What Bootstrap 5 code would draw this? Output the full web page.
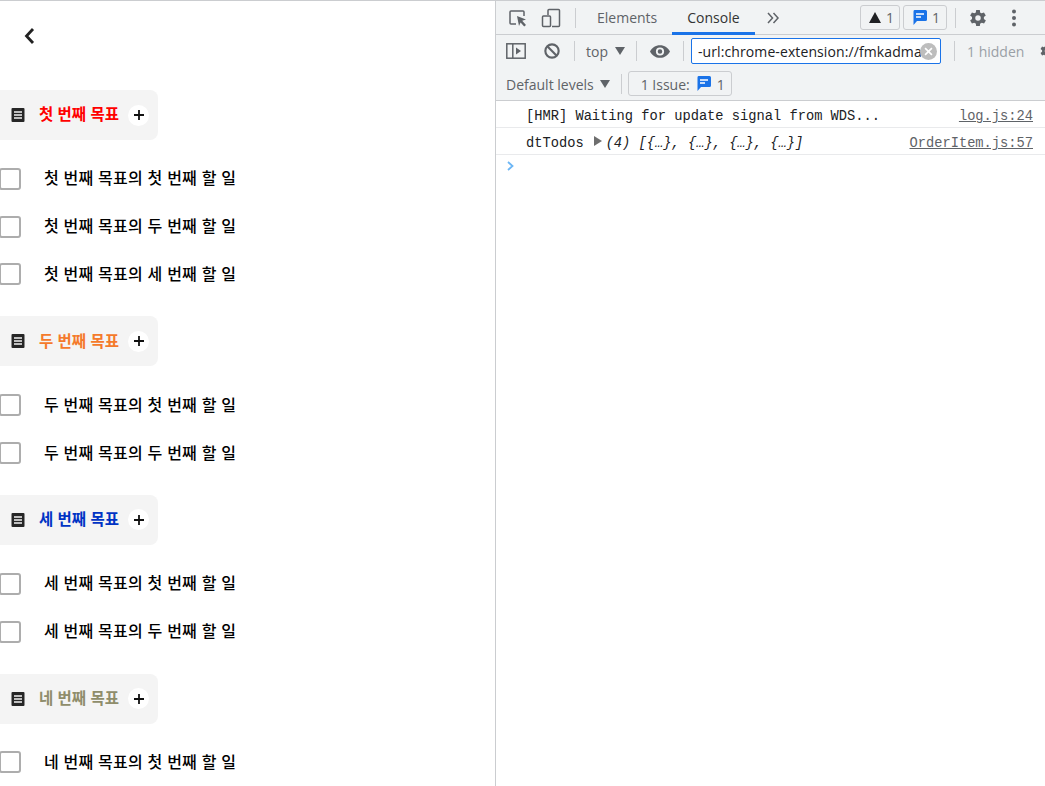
<!doctype html>
<html lang="ko"><head><meta charset="utf-8"><title>Todos</title>
<link href="https://cdn.jsdelivr.net/npm/bootstrap@5.3.0/dist/css/bootstrap.min.css" rel="stylesheet">
<style>
html,body{height:786px;overflow:hidden;background:#fff}
body{font-family:"Noto Sans CJK KR",sans-serif}
.frame{height:786px;border-top:1px solid #cbcdd0}
.app{width:495px;flex:none;overflow:hidden;background:#fff}
.backbar{height:89px;padding:20px 0 0 22px}
.goalhead{width:158px;height:50px;background:#f4f4f4;border-radius:0 8px 8px 0;padding-left:10px}
.goalname{font-size:15.5px;font-weight:700;margin:-2px 0 0 13px;width:81px;white-space:nowrap}
.plus{width:21px;height:21px;border-radius:50%;background:#fff;margin-left:8px}
.goal{margin-bottom:18px}
.goal>.tasks{margin-top:15px}
.taskrow{height:47.8px;margin-left:-1px}
.tick{width:22px;height:22px;border:2px solid #adadad;border-radius:3px;background:#fff;flex:none}
.taskname{margin:-3px 0 0 23px;font-size:16px;font-weight:500;color:#000;letter-spacing:.2px;white-space:nowrap}
.red{color:#f00}.orange{color:#f47a2b}.blue{color:#0033c4}.khaki{color:#8f8d6b}
.devtools{flex:1;min-width:0;overflow:hidden;border-left:1px solid #cbcdd0;font-family:"Open Sans",sans-serif;color:#5f6368;font-size:14px}
.bar{background:#f1f3f4;display:flex;align-items:center}
.bar svg{flex:none;display:block}
.bar1{height:34px;border-bottom:1px solid #cbcdd0;padding-left:12px}
.bar2{height:32px;padding-left:10px}
.bar3{height:34px;padding-left:10px;border-bottom:1px solid #cbcdd0}
.bar3 span{padding-top:2px}
.vsep{width:1px;height:20px;background:#cbcdd0;flex:none}
.dtab{height:33px;line-height:33px;padding:0 15px;white-space:nowrap}
.dtab.on{color:#333;border-bottom:3px solid #1a73e8;height:34px;margin-bottom:-1px}
.chip{height:25px;border:1px solid #cbcdd0;border-radius:3px;display:flex;align-items:center;white-space:nowrap;flex:none}
.chipwarn{width:40px;padding-left:8px;gap:5px;margin-left:auto}
.chipinfo{width:44px;padding-left:9px;gap:5px;margin-left:3px}
.chipissue{width:104px;padding-left:12px;margin-left:6px}
.filter{width:250px;height:26px;border:1px solid #1a73e8;border-radius:2px;background:#fff;color:#202124;display:flex;align-items:center;padding-left:6px;white-space:nowrap;flex:none;margin-left:7px;letter-spacing:.1px}
.filter span{flex:1}
.clearx{margin-right:4px;margin-left:-2px}
.dimtxt{color:#9aa0a6;margin-left:12px;white-space:nowrap}
.m6{margin-left:6px}.m7{margin-left:7px}.m8{margin-left:8px}.m11{margin-left:11px}.m13{margin-left:13px}.m14{margin-left:14px}.m18{margin-left:18px}
.dots{margin-right:20px}
.logline{height:27px;padding:7px 12px 0 30px;border-bottom:1px solid #e9eaec;font-family:"Liberation Mono",monospace;font-size:13.72px;color:#202124;display:flex;align-items:center;white-space:nowrap}
.logline a{margin-left:auto;color:#5f6368;text-decoration:underline}
.arrow{width:0;height:0;border-left:8px solid #6e6e6e;border-top:5px solid transparent;border-bottom:5px solid transparent;margin:0 4px 8px 10px}
.objtxt{font-style:italic}
.prompt{padding:5px 0 0 10px}
.prompt svg{display:block}
</style></head><body>
<div class="frame d-flex">
<main class="app">
 <div class="backbar"><svg width="16" height="22" viewBox="0 0 16 22"><path d="M11 4 4.500 11l6.500 7" fill="none" stroke="#212121" stroke-width="2.800"/></svg></div>

 <section class="goal">
  <div class="goalhead d-flex align-items-center">
   <svg width="16" height="16" viewBox="0 0 16 16"><rect x="1.500" y="1" width="13" height="14" rx="1" fill="#262626"/><path d="M4 5h8M4 8h8M4 11h8" stroke="#f4f4f4" stroke-width="1.400"/></svg>
   <div class="goalname red">첫 번째 목표</div>
   <div class="plus d-flex align-items-center justify-content-center"><svg width="12" height="12" viewBox="0 0 12 12"><path d="M6 1v10M1 6h10" stroke="#111" stroke-width="1.800"/></svg></div>
  </div>
  <div class="tasks">
   <div class="taskrow d-flex align-items-center"><div class="tick"></div><div class="taskname">첫 번째 목표의 첫 번째 할 일</div></div>
   <div class="taskrow d-flex align-items-center"><div class="tick"></div><div class="taskname">첫 번째 목표의 두 번째 할 일</div></div>
   <div class="taskrow d-flex align-items-center"><div class="tick"></div><div class="taskname">첫 번째 목표의 세 번째 할 일</div></div>
  </div>
 </section>

 <section class="goal">
  <div class="goalhead d-flex align-items-center">
   <svg width="16" height="16" viewBox="0 0 16 16"><rect x="1.500" y="1" width="13" height="14" rx="1" fill="#262626"/><path d="M4 5h8M4 8h8M4 11h8" stroke="#f4f4f4" stroke-width="1.400"/></svg>
   <div class="goalname orange">두 번째 목표</div>
   <div class="plus d-flex align-items-center justify-content-center"><svg width="12" height="12" viewBox="0 0 12 12"><path d="M6 1v10M1 6h10" stroke="#111" stroke-width="1.800"/></svg></div>
  </div>
  <div class="tasks">
   <div class="taskrow d-flex align-items-center"><div class="tick"></div><div class="taskname">두 번째 목표의 첫 번째 할 일</div></div>
   <div class="taskrow d-flex align-items-center"><div class="tick"></div><div class="taskname">두 번째 목표의 두 번째 할 일</div></div>
  </div>
 </section>

 <section class="goal">
  <div class="goalhead d-flex align-items-center">
   <svg width="16" height="16" viewBox="0 0 16 16"><rect x="1.500" y="1" width="13" height="14" rx="1" fill="#262626"/><path d="M4 5h8M4 8h8M4 11h8" stroke="#f4f4f4" stroke-width="1.400"/></svg>
   <div class="goalname blue">세 번째 목표</div>
   <div class="plus d-flex align-items-center justify-content-center"><svg width="12" height="12" viewBox="0 0 12 12"><path d="M6 1v10M1 6h10" stroke="#111" stroke-width="1.800"/></svg></div>
  </div>
  <div class="tasks">
   <div class="taskrow d-flex align-items-center"><div class="tick"></div><div class="taskname">세 번째 목표의 첫 번째 할 일</div></div>
   <div class="taskrow d-flex align-items-center"><div class="tick"></div><div class="taskname">세 번째 목표의 두 번째 할 일</div></div>
  </div>
 </section>

 <section class="goal">
  <div class="goalhead d-flex align-items-center">
   <svg width="16" height="16" viewBox="0 0 16 16"><rect x="1.500" y="1" width="13" height="14" rx="1" fill="#262626"/><path d="M4 5h8M4 8h8M4 11h8" stroke="#f4f4f4" stroke-width="1.400"/></svg>
   <div class="goalname khaki">네 번째 목표</div>
   <div class="plus d-flex align-items-center justify-content-center"><svg width="12" height="12" viewBox="0 0 12 12"><path d="M6 1v10M1 6h10" stroke="#111" stroke-width="1.800"/></svg></div>
  </div>
  <div class="tasks">
   <div class="taskrow d-flex align-items-center"><div class="tick"></div><div class="taskname">네 번째 목표의 첫 번째 할 일</div></div>
  </div>
 </section>
</main>

<aside class="devtools">
 <div class="bar bar1">
  <svg width="20" height="20" viewBox="0 0 20 20"><path d="M8 16H3a1 1 0 0 1-1-1V4a1 1 0 0 1 1-1h12a1 1 0 0 1 1 1v4" fill="none" stroke="#5f6368" stroke-width="1.500"/><path d="M9 8l9 3.500-3.800 1.200L18 17l-1.800 1.500-3.600-4L11 18z" fill="#5f6368"/></svg>
  <svg class="m13" width="20" height="20" viewBox="0 0 20 20"><path d="M7 7V2.500A1 1 0 0 1 8 1.500h9.500a1 1 0 0 1 1 1v15a1 1 0 0 1-1 1H11" fill="none" stroke="#5f6368" stroke-width="1.500"/><rect x="1.500" y="8" width="8" height="10.500" rx="1" fill="none" stroke="#5f6368" stroke-width="1.500"/></svg>
  <div class="vsep m14"></div>
  <div class="dtab m6">Elements</div>
  <div class="dtab on">Console</div>
  <svg class="m11" width="14" height="14" viewBox="0 0 14 14"><path d="M2 2l4.500 5L2 12M7.500 2 12 7l-4.500 5" fill="none" stroke="#5f6368" stroke-width="1.500"/></svg>
  <div class="chip chipwarn"><svg width="12" height="11" viewBox="0 0 12 11"><path d="M6 0 12 11H0z" fill="#202124"/></svg><span>1</span></div>
  <div class="chip chipinfo"><svg width="14" height="15" viewBox="0 0 14 15"><path d="M1.500 0h11A1.500 1.500 0 0 1 14 1.500v8A1.500 1.500 0 0 1 12.500 11H4l-3.500 4V1.500A1.500 1.500 0 0 1 1.500 0z" fill="#1a73e8"/><path d="M3 4h8M3 7h5" stroke="#fff" stroke-width="1.300"/></svg><span>1</span></div>
  <div class="vsep m8"></div>
  <svg class="m11" width="22" height="22" viewBox="0 0 24 24"><path fill="#5f6368" fill-rule="evenodd" d="M19.400 13a7.500 7.500 0 0 0 0-2l2.100-1.600-2-3.500-2.500 1a7.500 7.500 0 0 0-1.700-1L15 3.300h-4l-.4 2.600a7.500 7.500 0 0 0-1.700 1l-2.500-1-2 3.500L6.500 11a7.500 7.500 0 0 0 0 2l-2.100 1.600 2 3.500 2.500-1a7.500 7.500 0 0 0 1.700 1l.4 2.600h4l.4-2.600a7.500 7.500 0 0 0 1.700-1l2.500 1 2-3.500zM13 15a3 3 0 1 1 0-6 3 3 0 0 1 0 6z" transform="translate(-1 0)"/></svg>
  <svg class="m14 dots" width="22" height="22" viewBox="0 0 22 22"><circle cx="11" cy="4.500" r="2" fill="#5f6368"/><circle cx="11" cy="11" r="2" fill="#5f6368"/><circle cx="11" cy="17.500" r="2" fill="#5f6368"/></svg>
 </div>
 <div class="bar bar2">
  <svg width="20" height="18" viewBox="0 0 20 18"><rect x=".8" y="1.800" width="18.400" height="14.400" fill="none" stroke="#5f6368" stroke-width="1.500"/><path d="M6.800 2v14" stroke="#5f6368" stroke-width="1.500"/><path d="M10 5.500 15 9l-5 3.500z" fill="#5f6368"/></svg>
  <svg class="m18" width="16" height="16" viewBox="0 0 18 18"><circle cx="9" cy="9" r="7.500" fill="none" stroke="#5f6368" stroke-width="2.400"/><path d="M4 4l10 10" stroke="#5f6368" stroke-width="2.400"/></svg>
  <div class="vsep m14"></div>
  <span class="m11">top</span>
  <svg class="m7" width="10" height="8" viewBox="0 0 10 8"><path d="M0 0h10L5 8z" fill="#5f6368"/></svg>
  <div class="vsep m11"></div>
  <svg class="m13" width="20" height="13" viewBox="0 0 22 14"><path fill-rule="evenodd" d="M11 0C6 0 2 3 0 7c2 4 6 7 11 7s9-3 11-7c-2-4-6-7-11-7zm0 11.500A4.500 4.500 0 1 1 11 2.500a4.500 4.500 0 0 1 0 9zM11 4.500a2.500 2.500 0 1 0 0 5 2.500 2.500 0 0 0 0-5z" fill="#5f6368"/></svg>
  <div class="vsep m13"></div>
  <div class="filter"><span>-url:chrome-extension://fmkadma</span><svg class="clearx" width="17" height="17" viewBox="0 0 16 16"><circle cx="8" cy="8" r="8" fill="#bdbdbd"/><path d="M4.800 4.800l6.400 6.400M11.200 4.800l-6.400 6.400" stroke="#fff" stroke-width="1.500"/></svg></div>
  <div class="vsep m13"></div>
  <span class="dimtxt">1 hidden</span>
  <svg class="m14" width="18" height="18" viewBox="0 0 24 24"><path fill="#5f6368" fill-rule="evenodd" d="M19.400 13a7.500 7.500 0 0 0 0-2l2.100-1.600-2-3.500-2.500 1a7.500 7.500 0 0 0-1.700-1L15 3.300h-4l-.4 2.600a7.500 7.500 0 0 0-1.700 1l-2.500-1-2 3.500L6.500 11a7.500 7.500 0 0 0 0 2l-2.100 1.600 2 3.500 2.500-1a7.500 7.500 0 0 0 1.700 1l.4 2.600h4l.4-2.600a7.500 7.500 0 0 0 1.700-1l2.500 1 2-3.500zM13 15a3 3 0 1 1 0-6 3 3 0 0 1 0 6z" transform="translate(-1 0)"/></svg>
 </div>
 <div class="bar bar3">
  <span class="text-nowrap">Default levels</span>
  <svg class="m6" width="10" height="8" viewBox="0 0 10 8"><path d="M0 0h10L5 8z" fill="#5f6368"/></svg>
  <div class="vsep m11"></div>
  <div class="chip chipissue"><span>1 Issue:</span><svg class="m7" width="14" height="15" viewBox="0 0 14 15"><path d="M1.500 0h11A1.500 1.500 0 0 1 14 1.500v8A1.500 1.500 0 0 1 12.500 11H4l-3.500 4V1.500A1.500 1.500 0 0 1 1.500 0z" fill="#1a73e8"/><path d="M3 4h8M3 7h5" stroke="#fff" stroke-width="1.300"/></svg><span class="m6">1</span></div>
 </div>
 <div class="logline"><span>[HMR] Waiting for update signal from WDS...</span><a href="#">log.js:24</a></div>
 <div class="logline"><span>dtTodos</span><span class="arrow"></span><span class="objtxt">(4) [{…}, {…}, {…}, {…}]</span><a href="#">OrderItem.js:57</a></div>
 <div class="prompt"><svg width="10" height="12" viewBox="0 0 10 12"><path d="M2 2l4.500 4L2 10" fill="none" stroke="#6cb6f5" stroke-width="1.800"/></svg></div>
</aside>
</div>
</body></html>
